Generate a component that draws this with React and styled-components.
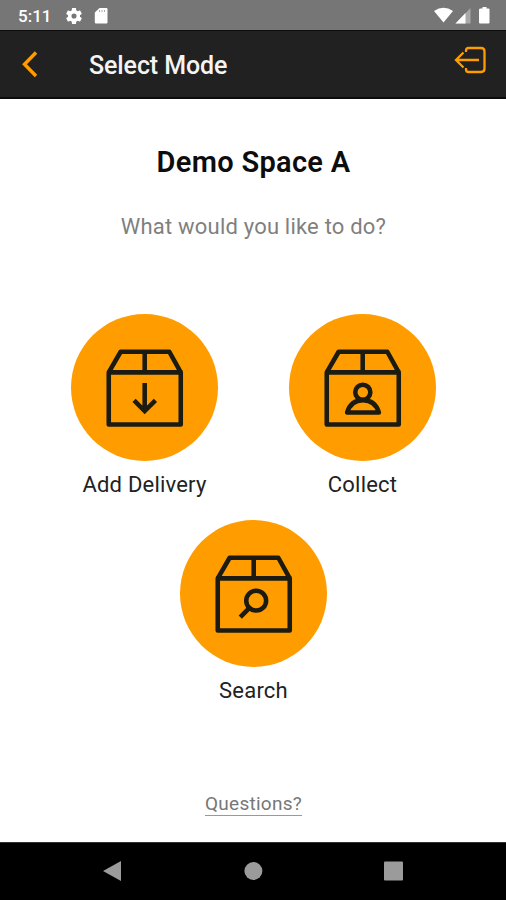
import styled, { createGlobalStyle } from "styled-components";

const GlobalStyle = createGlobalStyle`
  * {
    box-sizing: border-box;
  }
  body {
    margin: 0;
    background: #ffffff;
    font-family: Roboto, sans-serif;
  }
`;

const Screen = styled.div`
  width: 506px;
  height: 900px;
  display: flex;
  flex-direction: column;
  overflow: hidden;
`;

const StatusBar = styled.div`
  height: 30px;
  padding: 2px 15px 0 18px;
  background: #767676;
  color: #ffffff;
  display: flex;
  justify-content: space-between;
  align-items: center;
`;

const StatusGroup = styled.div`
  display: flex;
  align-items: center;
`;

const Clock = styled.span`
  width: 48px;
  font-size: 17px;
  font-weight: 500;
  line-height: 20px;
  white-space: nowrap;
`;

const Header = styled.header`
  height: 69px;
  padding: 0 19px 0 22px;
  background: #212121;
  border-top: 1px solid #0c0c0c;
  border-bottom: 2px solid #0c0c0c;
  display: flex;
  align-items: center;
`;

const IconButton = styled.button`
  display: flex;
  padding: 0;
  border: 0;
  background: none;
  color: #ff9d00;
  margin-bottom: ${(props) => props.$lift || 0}px;
`;

const HeaderTitle = styled.h1`
  flex: 1;
  margin: 4px 0 0 51px;
  color: #f4f4f4;
  font-size: 25px;
  font-weight: 500;
  line-height: 30px;
  letter-spacing: -0.1px;
`;

const Content = styled.main`
  flex: 1;
  display: flex;
  flex-direction: column;
  align-items: center;
  padding-top: 45px;
`;

const SpaceName = styled.h2`
  margin: 0;
  padding-left: 1px;
  color: #0d0d0d;
  font-size: 29px;
  font-weight: 600;
  line-height: 36px;
  letter-spacing: 0.3px;
`;

const Prompt = styled.p`
  margin: 32px 0 72px;
  padding-left: 1px;
  color: #7f7f7f;
  font-size: 22px;
  letter-spacing: 0.2px;
  line-height: 30px;
`;

const Modes = styled.div`
  width: 437px;
  padding-left: 1px;
  display: flex;
  flex-wrap: wrap;
  justify-content: center;
  row-gap: 19px;
`;

const Mode = styled.button`
  width: 218px;
  height: 187px;
  padding: 0;
  border: 0;
  background: none;
  display: flex;
  flex-direction: column;
  align-items: center;
  font-family: inherit;
`;

const Circle = styled.span`
  width: 147px;
  height: 147px;
  border-radius: 50%;
  background: #ff9d00;
  display: flex;
`;

const ModeLabel = styled.span`
  margin-top: 9px;
  color: #222222;
  font-size: 22px;
  letter-spacing: 0.2px;
  line-height: 30px;
`;

const Questions = styled.a`
  margin: 86px 0 0 1px;
  color: #777777;
  font-size: 19px;
  letter-spacing: 0.25px;
  line-height: 22px;
  border-bottom: 1px solid #999999;
`;

const NavBar = styled.nav`
  height: 58px;
  padding: 0 102px 2px;
  background: #000000;
  border-top: 1px solid #333333;
  display: flex;
  align-items: center;
  justify-content: space-between;
`;

const BoxIcon = ({ children }) => (
  <svg
    width="147"
    height="147"
    viewBox="0 0 148 148"
    fill="none"
    stroke="#1b1b12"
    strokeWidth="4.6"
    strokeLinejoin="round"
  >
    <path d="M38 58.800H110.500V111.300H38Z" />
    <path d="M38 58.800L50 38H99L110.500 58.800M74.200 38V58.800" />
    {children}
  </svg>
);

const modes = [
  {
    label: "Add Delivery",
    glyph: <path d="M74.200 69.500V97M63.500 87L74.200 97.700L85 87" strokeLinejoin="miter" />,
  },
  {
    label: "Collect",
    glyph: (
      <>
        <circle cx="74.300" cy="78.800" r="7.600" />
        <path d="M58.500 99.200H90.500C88 91 82 86.700 74.500 86.700S61 91 58.500 99.200Z" />
      </>
    ),
  },
  {
    label: "Search",
    glyph: (
      <>
        <circle cx="76.700" cy="81.200" r="10" />
        <path d="M69.700 88.700L60.700 97.700" />
      </>
    ),
  },
];

const App = () => {
  return (
    <Screen>
      <GlobalStyle />
      <StatusBar>
        <StatusGroup>
          <Clock>5:11</Clock>
          {/* settings */}
          <svg width="16" height="16" viewBox="2 2 20 20" fill="#fff">
            <path d="M19.430 12.980c.04-.32.07-.64.07-.98s-.03-.66-.07-.98l2.110-1.650c.19-.15.24-.42.12-.64l-2-3.460c-.12-.22-.39-.3-.61-.22l-2.490 1c-.52-.4-1.080-.73-1.690-.98l-.38-2.650C14.460 2.180 14.250 2 14 2h-4c-.25 0-.46.18-.49.42l-.38 2.650c-.61.25-1.170.59-1.690.98l-2.490-1c-.23-.09-.49 0-.61.22l-2 3.460c-.13.22-.07.49.12.64l2.110 1.650c-.04.32-.07.65-.07.98s.03.66.07.98l-2.110 1.650c-.19.15-.24.42-.12.64l2 3.460c.12.22.39.3.61.22l2.490-1c.52.4 1.080.73 1.690.98l.38 2.650c.03.24.24.42.49.42h4c.25 0 .46-.18.49-.42l.38-2.650c.61-.25 1.170-.59 1.690-.98l2.490 1c.23.09.49 0 .61-.22l2-3.460c.12-.22.07-.49-.12-.64zM12 15.200a3.200 3.200 0 1 1 0-6.400 3.200 3.200 0 0 1 0 6.400z" />
          </svg>
          {/* sd card */}
          <svg width="27" height="18" viewBox="0 0 27 18">
            <path d="M17.500 1H24.500Q25.500 1 25.500 2V15.500Q25.500 16.500 24.500 16.500H14Q12.800 16.500 12.800 15.500V5.500Z" fill="#fff" />
            <path d="M17.500 3V5M20 3V5M22.500 3V5" stroke="#aaa" strokeWidth="1" />
          </svg>
        </StatusGroup>
        <StatusGroup>
          <svg width="57" height="20" viewBox="0 0 57 20">
            <path d="M0 5Q9.500 -1.300 19 5L9.500 16.500Z" fill="#fff" />
            <path d="M36.500 2V17.500H21.500Z" fill="#a9a9a9" />
            <path d="M31.500 7V17.500H21.500Z" fill="#fff" />
            <path d="M47 2.500H48.500V1H52.500V2.500H54.500Q55.500 2.500 55.500 3.500V16.500Q55.500 17.500 54.500 17.500H46Q45 17.500 45 16.500V3.500Q45 2.500 47 2.500Z" fill="#fff" />
          </svg>
        </StatusGroup>
      </StatusBar>
      <Header>
        <IconButton aria-label="Back">
          <svg width="16" height="28" viewBox="0 0 16 28" fill="none" stroke="currentColor" strokeWidth="3.4">
            <path d="M14 2.500L2.500 14.200L14 26" />
          </svg>
        </IconButton>
        <HeaderTitle>Select Mode</HeaderTitle>
        <IconButton aria-label="Log out" $lift={9}>
          <svg width="33" height="28" viewBox="0 0 33 28" fill="none" stroke="currentColor" strokeWidth="2.3">
            <path d="M12 6V4.500Q12 2 14.500 2H27Q30.500 2 30.500 5.500V22.500Q30.500 26 27 26H14.500Q12 26 12 23.500V22" />
            <path d="M25 14H2M9.500 6.500L2 14L9.500 21.500" />
          </svg>
        </IconButton>
      </Header>
      <Content>
        <SpaceName>Demo Space A</SpaceName>
        <Prompt>What would you like to do?</Prompt>
        <Modes>
          {modes.map((mode) => (
            <Mode key={mode.label}>
              <Circle>
                <BoxIcon>{mode.glyph}</BoxIcon>
              </Circle>
              <ModeLabel>{mode.label}</ModeLabel>
            </Mode>
          ))}
        </Modes>
        <Questions>Questions?</Questions>
      </Content>
      <NavBar>
        <svg width="20" height="22" viewBox="0 0 20 22">
          <path d="M1 11L19 1V21Z" fill="#9b9b9b" />
        </svg>
        <svg width="20" height="20" viewBox="0 0 20 20">
          <circle cx="10.400" cy="10" r="9" fill="#9b9b9b" />
        </svg>
        <svg width="20" height="20" viewBox="0 0 20 20">
          <rect x="0" y="0.500" width="19" height="19" rx="1" fill="#9b9b9b" />
        </svg>
      </NavBar>
    </Screen>
  );
};

export default App;
